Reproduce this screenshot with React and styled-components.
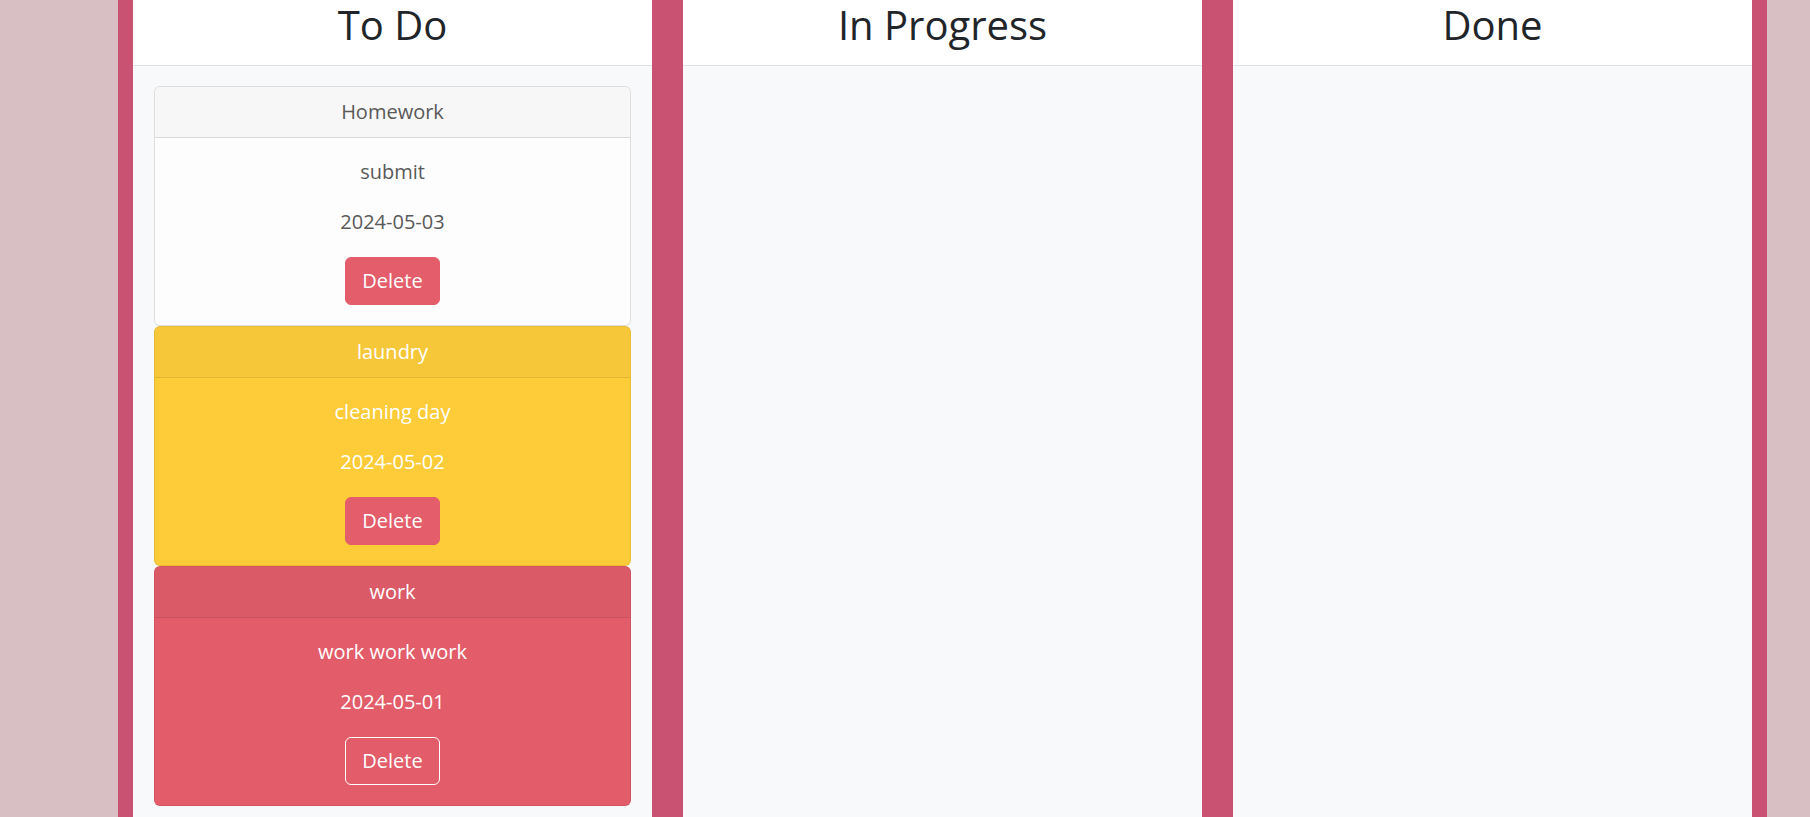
import styled, { createGlobalStyle } from "styled-components";

const GlobalStyle = createGlobalStyle`
  html, body {
    margin: 0;
    padding: 0;
    background: #d7bfc3;
    font-family: "Open Sans", "Liberation Sans", sans-serif;
    color: #212529;
  }
  * {
    box-sizing: border-box;
  }
`;

const CARD_THEMES = {
  light: {
    header: "#f7f7f7",
    body: "#fdfdfd",
    text: "#595959",
    border: "rgba(0, 0, 0, 0.12)",
  },
  warning: {
    header: "#f7c73a",
    body: "#fdcc38",
    text: "#ffffff",
    border: "rgba(0, 0, 0, 0.08)",
  },
  danger: {
    header: "#da5a68",
    body: "#e25c6a",
    text: "#ffffff",
    border: "rgba(0, 0, 0, 0.08)",
  },
};

const COLUMNS = [
  {
    title: "To Do",
    tasks: [
      { id: 1, name: "Homework", desc: "submit", date: "2024-05-03", variant: "light" },
      { id: 2, name: "laundry", desc: "cleaning day", date: "2024-05-02", variant: "warning" },
      { id: 3, name: "work", desc: "work work work", date: "2024-05-01", variant: "danger" },
    ],
  },
  { title: "In Progress", tasks: [] },
  { title: "Done", tasks: [] },
];

const TaskCard = ({ task }) => {
  const theme = CARD_THEMES[task.variant];
  return (
    <Card $theme={theme}>
      <CardHeader $theme={theme}>{task.name}</CardHeader>
      <CardBody $theme={theme}>
        <CardText>{task.desc}</CardText>
        <CardText>{task.date}</CardText>
        <DeleteButton $outline={task.variant === "danger"}>Delete</DeleteButton>
      </CardBody>
    </Card>
  );
};

const App = () => {
  return (
    <>
      <GlobalStyle />
      <Board>
        {COLUMNS.map((column) => (
          <Column key={column.title}>
            <ColumnHeader>
              <ColumnTitle>{column.title}</ColumnTitle>
            </ColumnHeader>
            <ColumnBody>
              {column.tasks.map((task) => (
                <TaskCard key={task.id} task={task} />
              ))}
            </ColumnBody>
          </Column>
        ))}
      </Board>
    </>
  );
};

export default App;

const Board = styled.div`
  margin-left: 118px;
  width: 1649px;
  min-height: 100vh;
  padding: 0 15px;
  background: #c95273;
  display: grid;
  grid-template-columns: repeat(3, 1fr);
  column-gap: 31px;
`;

const Column = styled.div`
  display: flex;
  flex-direction: column;
  background: #f8f9fa;
  min-height: 100vh;
`;

const ColumnHeader = styled.div`
  height: 66px;
  padding-top: 1px;
  background: #ffffff;
  border-bottom: 1px solid #dee2e6;
  text-align: center;
`;

const ColumnTitle = styled.h1`
  margin: 0;
  font-size: 40px;
  line-height: 48px;
  font-weight: 400;
  color: #212529;
`;

const ColumnBody = styled.div`
  padding: 20px 21px;
  display: flex;
  flex-direction: column;
`;

const Card = styled.div`
  border: 1px solid ${(props) => props.$theme.border};
  border-radius: 6px;
  overflow: hidden;
  background: ${(props) => props.$theme.body};
  color: ${(props) => props.$theme.text};
  text-align: center;
`;

const CardHeader = styled.div`
  padding: 13px 20px;
  font-size: 20px;
  line-height: 24px;
  background: ${(props) => props.$theme.header};
  border-bottom: 1px solid ${(props) => props.$theme.border};
`;

const CardBody = styled.div`
  padding: 19px 20px 20px;
  display: flex;
  flex-direction: column;
  align-items: center;
  background: ${(props) => props.$theme.body};
`;

const CardText = styled.p`
  margin: 0 0 20px;
  font-size: 20px;
  line-height: 30px;
`;

const DeleteButton = styled.button`
  height: 48px;
  padding: 8px 16px;
  font-family: "Open Sans", "Liberation Sans", sans-serif;
  font-size: 20px;
  line-height: 30px;
  color: #ffffff;
  background: ${(props) => (props.$outline ? "transparent" : "#e35d6a")};
  border: 1px solid ${(props) => (props.$outline ? "#ffffff" : "#e35d6a")};
  border-radius: 6px;
  cursor: pointer;
`;
